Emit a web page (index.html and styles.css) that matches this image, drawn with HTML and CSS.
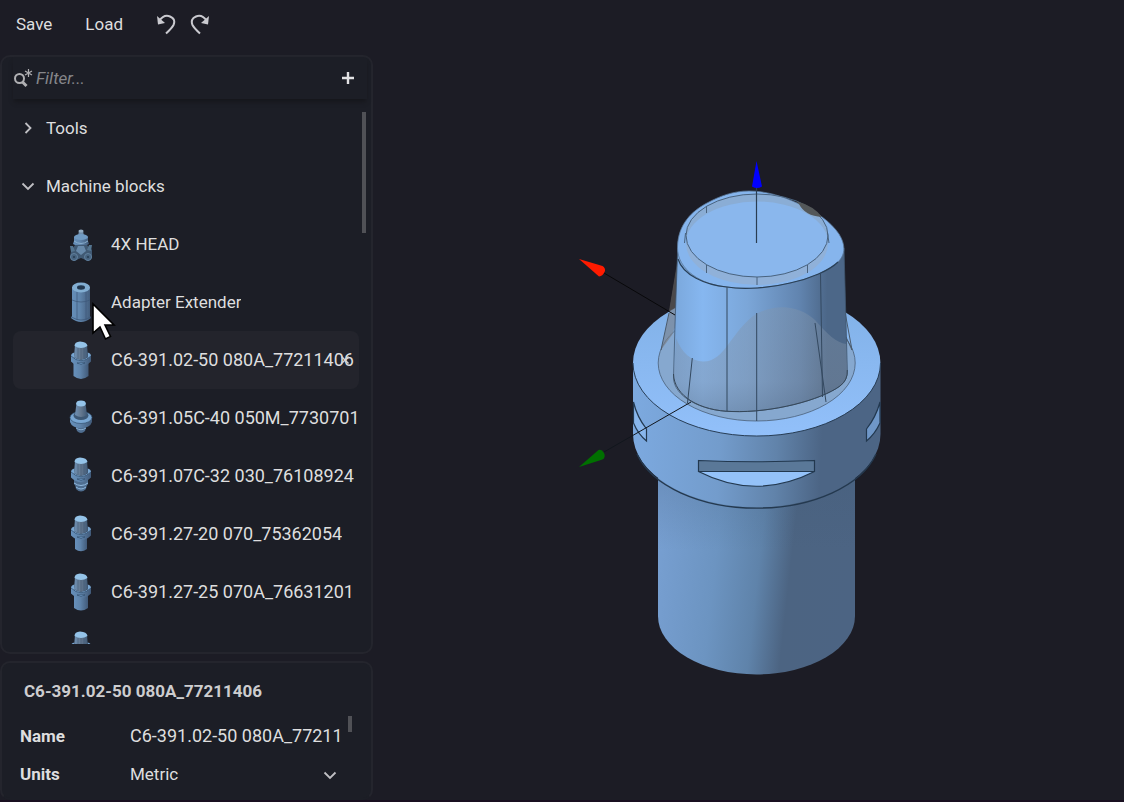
FILE: index.html
```html
<!DOCTYPE html>
<html lang="en">
<head>
<meta charset="utf-8">
<title>Machine blocks</title>
<link rel="stylesheet" href="styles.css">
</head>
<body>
<svg class="defs" aria-hidden="true">
  <defs>
    <linearGradient id="steel"><stop offset="0" stop-color="#6690bb"/><stop offset=".45" stop-color="#5f84ab"/><stop offset="1" stop-color="#415a79"/></linearGradient>
    <linearGradient id="cone"><stop offset="0" stop-color="#6c8fb3"/><stop offset=".5" stop-color="#64788f"/><stop offset="1" stop-color="#405a77"/></linearGradient>
    <g id="taper">
      <path d="M6 6L5 18Q12 23 19 18L18 6z" fill="url(#cone)"/>
      <path d="M9 9v11M12 9v12M15 9v11" stroke="#455c75" stroke-width=".6"/>
      <path d="M5.500 7Q5.500 3 11 2.600Q18 3 18.500 7Q12 11 5.500 7z" fill="#94c3e8"/>
    </g>
    <g id="collar">
      <path d="M2 16.500v6Q12 32 22 22.500v-6Q12 26 2 16.500z" fill="url(#steel)"/>
      <path d="M2 17Q2 14 5.500 13.500L5 18Q12 23 19 18L18.500 13.500Q22 14 22 17Q12 26.500 2 17z" fill="#78a6d2"/>
      <path d="M2 17Q12 26.500 22 17" fill="none" stroke="#2f4a68" stroke-width=".7"/>
      <path d="M8 24h8q-4 3-8 0z" fill="#7fb0df" stroke="#2f4a68" stroke-width=".7"/>
    </g>
    <symbol id="block" viewBox="0 0 24 42"><path d="M4.500 22v15q7.500 6 15 0V22z" fill="url(#steel)"/><use href="#collar"/><use href="#taper"/></symbol>
    <symbol id="block20" viewBox="0 0 24 42"><path d="M6 22v14q6 4.500 12 0V22z" fill="url(#steel)"/><use href="#collar"/><use href="#taper"/></symbol>
    <symbol id="block25" viewBox="0 0 24 42"><path d="M5 22v15q7 5 14 0V22z" fill="url(#steel)"/><use href="#collar"/><use href="#taper"/></symbol>
    <symbol id="block32" viewBox="0 0 24 42"><path d="M5 23v6q2 2 2 5q5 5 10 0q0-3 2-5v-6z" fill="#4f6e90"/><path d="M5 28q7 5 14 0M7 32q5 4 10 0" fill="none" stroke="#91bae0"/><use href="#collar"/><use href="#taper"/></symbol>
    <symbol id="block40" viewBox="0 0 24 42"><path d="M6 27l2 7q4 4 8 0l2-7z" fill="#4f6e90"/><path d="M7 31q5 3.500 10 0" fill="none" stroke="#86acd0"/><path d="M1 20v5Q3 31 12 31T23 25v-5z" fill="url(#steel)"/><ellipse cx="12" cy="20.500" rx="11" ry="6" fill="#78a6d2" stroke="#355372" stroke-width=".7"/><ellipse cx="12" cy="18.500" rx="7.500" ry="4.500" fill="#3d5875"/><path d="M7.500 6L6 18q6 4 12 0L16.500 6z" fill="url(#cone)"/><ellipse cx="12" cy="6.500" rx="4.800" ry="3" fill="#94c3e8"/></symbol>
    <symbol id="head" viewBox="0 0 24 42"><path d="M10 7h4l1 7H9z" fill="#6e8daa"/><ellipse cx="12" cy="8" rx="2.500" ry="1.500" fill="#91abc2"/><path d="M5 14v4l-1 3q8 5 16 0l-1-3v-4z" fill="url(#steel)"/><ellipse cx="12" cy="14" rx="7" ry="3" fill="#6f9ac2"/><path d="M5 18q7 5 14 0" fill="none" stroke="#89aecd"/><path d="M6 22h12l5 5v8l-4 3-7-3-7 3-4-4 1-6z" fill="#405973"/><path d="M1 23h3l2 5-4 1zM23 22h-3l-2 5 4 1z" fill="#547590"/><path d="M9 23h6l2 5-5 4-5-4z" fill="#6789aa"/><circle cx="5" cy="34" r="3.500" fill="#46627e" stroke="#60809d"/><circle cx="19" cy="34" r="3.500" fill="#46627e" stroke="#60809d"/><circle cx="5" cy="34" r="1" fill="#263b50"/><circle cx="19" cy="34" r="1" fill="#263b50"/></symbol>
    <symbol id="adapter" viewBox="0 0 24 42"><path d="M3 6v29l-1 2q10 8 20 0l-1-2V6z" fill="url(#steel)"/><path d="M3 19q9 4 18 0M8 11v28M17 11v28M2.500 36q9.500 6 19 0" fill="none" stroke="#3c5878" stroke-width=".7"/><ellipse cx="12" cy="6.500" rx="9" ry="5" fill="#82aed2"/><ellipse cx="12" cy="6.500" rx="4" ry="2.200" fill="#22384f"/></symbol>
  </defs>
</svg>

<div class="app">
  <aside class="sidebar">
    <header class="toolbar">
      <button class="text-button">Save</button>
      <button class="text-button">Load</button>
      <div class="history">
        <button class="icon-button" aria-label="Undo"><svg width="20" height="22" viewBox="0 0 20 22"><path d="M3 8Q8 1 14 3.500T17.500 12Q16 15 10 20.500" fill="none" stroke="#c9c9cf" stroke-width="2"/><path d="M1 3l1 8.500L9 10z" fill="#c9c9cf"/></svg></button>
        <button class="icon-button" aria-label="Redo"><svg width="20" height="22" viewBox="0 0 20 22"><path d="M17 8Q12 1 6 3.500T2.500 12Q4 15 10 20.500" fill="none" stroke="#c9c9cf" stroke-width="2"/><path d="M19 3l-1 8.500L11 10z" fill="#c9c9cf"/></svg></button>
      </div>
    </header>

    <section class="panel library">
      <div class="filter">
        <svg width="20" height="20" viewBox="0 0 20 20" aria-hidden="true"><circle cx="6.500" cy="10.500" r="4.500" fill="none" stroke="#b0b0b3" stroke-width="2"/><path d="M9 13.500l4.500 4.500" stroke="#b0b0b3" stroke-width="3"/><path d="M15.500 1v8M12 3l7 4M19 3l-7 4" stroke="#b0b0b3" stroke-width="1.200"/></svg>
        <input class="filter-input" type="text" placeholder="Filter..." aria-label="Filter">
        <button class="icon-button" aria-label="Add"><svg width="14" height="14" viewBox="0 0 14 14"><path d="M7 1v12M1 7h12" stroke="#e2e2e4" stroke-width="2.400"/></svg></button>
      </div>
      <div class="tree">
        <button class="row group"><svg class="chevron" width="14" height="14" viewBox="0 0 14 14"><path d="M4.500 2l5 5-5 5" fill="none" stroke="#c0c0c4" stroke-width="1.800"/></svg><span>Tools</span></button>
        <button class="row group"><svg class="chevron" width="14" height="14" viewBox="0 0 14 14"><path d="M1.500 4.500l5.500 5.500 5.500-5.500" fill="none" stroke="#c0c0c4" stroke-width="1.800"/></svg><span>Machine blocks</span></button>
        <div class="entry"><button class="row item"><svg class="thumb"><use href="#head"/></svg><span class="label">4X HEAD</span></button></div>
        <div class="entry"><button class="row item"><svg class="thumb"><use href="#adapter"/></svg><span class="label">Adapter Extender</span></button>
          <svg class="pointer" width="26" height="40" viewBox="0 0 26 40" aria-hidden="true"><path d="M2 2v29l7-6 5.500 12 5-2.500L14 23h9z" fill="#fff" stroke="#000" stroke-width="1.600"/></svg></div>
        <div class="entry selected"><button class="row item"><svg class="thumb"><use href="#block"/></svg><span class="label code">C6-391.02-50 080A_77211406</span></button>
          <button class="remove" aria-label="Remove"><svg width="10" height="10" viewBox="0 0 10 10"><path d="M1.500 1.500l7 7M8.500 1.500l-7 7" stroke="#d4d4d6" stroke-width="1.500"/></svg></button></div>
        <div class="entry"><button class="row item"><svg class="thumb"><use href="#block40"/></svg><span class="label code">C6-391.05C-40 050M_7730701</span></button></div>
        <div class="entry"><button class="row item"><svg class="thumb"><use href="#block32"/></svg><span class="label code">C6-391.07C-32 030_76108924</span></button></div>
        <div class="entry"><button class="row item"><svg class="thumb"><use href="#block20"/></svg><span class="label code">C6-391.27-20 070_75362054</span></button></div>
        <div class="entry"><button class="row item"><svg class="thumb"><use href="#block25"/></svg><span class="label code">C6-391.27-25 070A_76631201</span></button></div>
        <div class="entry"><button class="row item" aria-label="Next block"><svg class="thumb"><use href="#block"/></svg></button></div>
      </div>
      <i class="scroll-thumb"></i>
    </section>

    <section class="panel properties">
      <h2 class="title">C6-391.02-50 080A_77211406</h2>
      <div class="field"><label for="name">Name</label><input id="name" class="code" type="text" value="C6-391.02-50 080A_77211406"></div>
      <div class="field"><label for="units">Units</label>
        <div class="select"><select id="units"><option>Metric</option></select><svg width="14" height="14" viewBox="0 0 14 14" aria-hidden="true"><path d="M1.500 4.500l5.500 5.500 5.500-5.500" fill="none" stroke="#c0c0c4" stroke-width="1.800"/></svg></div></div>
      <i class="scroll-thumb small"></i>
    </section>
  </aside>

  <main class="viewport">
    <svg class="scene" viewBox="373 0 751 802" role="img" aria-label="3D view of the selected block">
      <defs>
        <linearGradient id="stem" gradientUnits="userSpaceOnUse" x1="658" y1="540" x2="855" y2="562"><stop offset="0" stop-color="#779fd1"/><stop offset=".3" stop-color="#6c94c1"/><stop offset=".52" stop-color="#5f83aa"/><stop offset=".68" stop-color="#4c6482"/><stop offset="1" stop-color="#4c6483"/></linearGradient>
        <linearGradient id="stemShade" x1="0" y1="0" x2="0" y2="1"><stop offset="0" stop-color="#405a78" stop-opacity=".25"/><stop offset="1" stop-color="#405a78" stop-opacity="0"/></linearGradient>
        <linearGradient id="ring" gradientUnits="userSpaceOnUse" x1="633" y1="440" x2="881" y2="452"><stop offset="0" stop-color="#7ca9df"/><stop offset=".35" stop-color="#739ccc"/><stop offset=".58" stop-color="#6183aa"/><stop offset=".76" stop-color="#4c6585"/><stop offset="1" stop-color="#4c6585"/></linearGradient>
        <linearGradient id="ringTop" x1="0" y1="0" x2="0" y2="1"><stop offset="0" stop-color="#80b0e6"/><stop offset="1" stop-color="#92c0fa"/></linearGradient>
        <linearGradient id="body" gradientUnits="userSpaceOnUse" x1="675" y1="340" x2="848" y2="340"><stop offset="0" stop-color="#7ba8dc"/><stop offset=".16" stop-color="#86b7f0"/><stop offset=".42" stop-color="#7ba6d8"/><stop offset=".72" stop-color="#6184af"/><stop offset=".88" stop-color="#4c6788"/><stop offset="1" stop-color="#4c6788"/></linearGradient>
        <linearGradient id="veil" gradientUnits="userSpaceOnUse" x1="0" y1="310" x2="0" y2="412"><stop offset="0" stop-color="#8295ab" stop-opacity=".4"/><stop offset=".7" stop-color="#8290a2" stop-opacity=".4"/><stop offset="1" stop-color="#68788c" stop-opacity=".5"/></linearGradient>
        <clipPath id="face"><ellipse cx="757" cy="235.500" rx="71" ry="41.500"/></clipPath>
        <clipPath id="top"><path d="M677.500 247C678 224 692 211 707 203C720 196 733 191 749 191C766 191 782 196 797 203C816 211 831 222 839 234C847 247 844 256 838 262C830 270 810 279 790 283C770 288 744 290 727 287C702 285 677 270 677.500 247z"/></clipPath>
      </defs>
      <path d="M658 450V616A98.500 58.500 0 0 0 855 616V450z" fill="url(#stem)"/>
      <path d="M658 470H855V550H658z" fill="url(#stemShade)"/>
      <path d="M633 363V434A123.700 73 0 0 0 880.500 434V363z" fill="url(#ring)"/>
      <path d="M637 454A123.700 73 0 0 0 876 454" fill="none" stroke="#24394f" stroke-width="1.400"/>
      <ellipse cx="756.700" cy="363" rx="123.700" ry="73" fill="url(#ringTop)"/>
      <path d="M633 363A123.700 73 0 0 0 880.500 363" fill="none" stroke="#273d55"/>
      <ellipse cx="756.700" cy="363" rx="98.500" ry="58" fill="#86a8cf" stroke="#4a6078" stroke-width=".8"/>
      <path d="M677 266L669 314L661 350L672 335L680 315z" fill="#797f89" fill-opacity=".65"/>
      <path d="M677 263L669 311L678 306z" fill="#4b494b"/>
      <path d="M669 313L661 350M845 312L852 350L846 337" fill="none" stroke="#4b5b6c"/>
      <path d="M677.700 248L675 325L673.500 378C674 396 700 411 732 411.500C772 413 821 400 840 386Q848 380 847.300 370L844 248z" fill="url(#body)" stroke="#3f566f" stroke-width=".8"/>
      <path d="M676 338C682 353 691 361 703 361.500C725 362 731 331 756 314C779 302 801 307 815 320C827 334 837 343 846 344L847.300 371Q848 380 840 386C821 400 772 413 732 411.500C700 411 674 396 673.500 378z" fill="url(#veil)"/>
      <path d="M673.500 374C674 396 700 411 732 411.500C772 413 821 400 840 386Q848 380 847.300 370" fill="none" stroke="#354759"/>
      <path d="M727 287V411M756.700 313V421M820.500 273L822.500 397M815 323L826 402M692.300 358L687.500 403" fill="none" stroke="#33485f"/>
      <g clip-path="url(#top)">
        <path d="M672 185H850V295H672z" fill="#86b5ed"/>
        <path d="M686 235.500V243.500A71 41.500 0 0 0 828 243.500V235.500z" fill="#90b1d9"/>
        <ellipse cx="757" cy="235.500" rx="71" ry="41.500" fill="#8aadd5"/>
        <ellipse cx="757" cy="243" rx="71" ry="41.500" fill="#8ab7ed" clip-path="url(#face)"/>
      </g>
      <ellipse cx="757" cy="235.500" rx="71" ry="41.500" fill="none" stroke="#49637f"/>
      <path d="M677.500 247C678 224 692 211 707 203C720 196 733 191 749 191C766 191 782 196 797 203C816 211 831 222 839 234C847 247 844 256 838 262C830 270 810 279 790 283C770 288 744 290 727 287C702 285 677 270 677.500 247z" fill="none" stroke="#5b7798" stroke-width=".8"/>
      <path d="M678 259C683 275 705 285 727 287C744 290 770 288 790 283C810 279 830 270 838 262" fill="none" stroke="#2a4057" stroke-width="1.200"/>
      <path d="M706.500 206V213M706.500 265V273M757 277V285M807.500 265V273M685.500 233L684.500 243M827.500 233L829 243" stroke="#49637f"/>
      <path d="M796 201Q814 206 822 217Q805 216 799 204z" fill="#535759"/>
      <g stroke="#22384f" stroke-width="1.200">
        <path d="M698.500 460.500Q756 463 814.500 460.500V471.500H698.500z" fill="#5a7898"/>
        <path d="M698.500 471.500H814.500Q756 501 698.500 471.500z" fill="#94c2f9"/>
        <path d="M633.500 402Q637 417 646.500 429V441Q638 434 633.500 423z" fill="#88b6ec"/>
        <path d="M880 402Q876 417 866.500 429V441Q875 434 880 423z" fill="#6f97c8"/>
      </g>
      <path d="M604 273L675 315" stroke="#08080a"/>
      <path d="M604 452L691 402" stroke="#11161d"/>
      <path d="M756.500 187V243" stroke="#2a3d52" stroke-width="1.200"/>
      <path d="M756.500 161L752 186.500Q757 189.500 762 186.500z" fill="#0000ff"/>
      <path d="M579 259L602.500 266Q605.500 268 605 271Q603 276 599 276.500z" fill="#ff1b00"/>
      <path d="M579 467L598.500 450Q602 449 604 453Q606 457 602.500 459.500z" fill="#007000"/>
    </svg>
  </main>
</div>
</body>
</html>
```

FILE: styles.css
```css
* { box-sizing: border-box; }

body {
  margin: 0;
  background: #1c1c25;
  color: #dededf;
  font: 17px/20px Roboto, "Liberation Sans", sans-serif;
}

button, input, select {
  margin: 0;
  padding: 0;
  border: 0;
  background: none;
  color: inherit;
  font: inherit;
  text-align: left;
}

svg { display: block; flex: none; }

.defs { position: absolute; width: 0; height: 0; }

.app {
  display: grid;
  grid-template-columns: 373px minmax(0, 1fr);
  height: 100vh;
  box-shadow: inset 0 -2px #190f20;
}

.sidebar {
  display: flex;
  flex-direction: column;
  gap: 7px;
  min-height: 0;
  padding-bottom: 2px;
}

.toolbar {
  display: flex;
  align-items: center;
  gap: 33px;
  height: 48px;
  flex: none;
  padding: 0 16px;
}

.history { display: flex; gap: 14px; }

.panel {
  position: relative;
  border: 2px solid #24252d;
  border-radius: 10px;
  background: #1c1e26;
}

.library {
  display: flex;
  flex-direction: column;
  flex: 1;
  min-height: 0;
  padding: 0 4px 8px 11px;
}

.filter {
  display: flex;
  align-items: center;
  gap: 3px;
  height: 42px;
  flex: none;
  padding-right: 12px;
  box-shadow: 0 4px 4px -1px #16171c;
}

.filter-input {
  flex: 1;
  min-width: 0;
  font-style: italic;
}

.filter-input::placeholder { color: #85868a; opacity: 1; }

.tree {
  flex: 1;
  min-height: 0;
  overflow: hidden;
  padding-right: 8px;
}

.row {
  display: flex;
  align-items: center;
  width: 100%;
  height: 58px;
}

.group { gap: 11px; padding-left: 8px; }

.item { gap: 18px; padding-left: 56px; }

.entry { position: relative; border-radius: 8px; }

.selected { background: #23242c; }

.thumb { width: 24px; height: 42px; }

.label {
  min-width: 0;
  overflow: hidden;
  white-space: nowrap;
}

.label.code, .field .code { font-size: 18px; }

.remove {
  position: absolute;
  top: 24px;
  right: 9px;
}

.pointer {
  position: absolute;
  top: 29px;
  left: 78px;
  z-index: 1;
}

.scroll-thumb {
  position: absolute;
  top: 55px;
  right: 5px;
  width: 4px;
  height: 121px;
  background: #505156;
}

.properties {
  height: 139px;
  flex: none;
  padding: 18px 29px 0 18px;
  border-bottom-color: #1c1e26;
}

.title {
  margin: 0 0 16px;
  padding-left: 4px;
  color: #cdcdcf;
  font-size: 17px;
  line-height: 20px;
  font-weight: 700;
}

.field {
  display: grid;
  grid-template-columns: 110px minmax(0, 1fr);
  align-items: center;
  height: 38px;
}

.field label { font-weight: 700; }

.field input { width: 100%; }

.select { position: relative; }

.select select { width: 100%; appearance: none; }

.select svg {
  position: absolute;
  top: 4px;
  right: 5px;
  pointer-events: none;
}

.scroll-thumb.small { top: 53px; right: 19px; height: 16px; }

.viewport { min-width: 0; min-height: 0; }

.scene { width: 100%; height: 100%; }
```
